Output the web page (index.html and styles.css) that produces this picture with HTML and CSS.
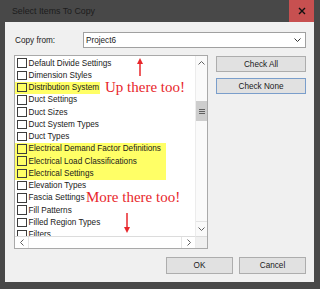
FILE: index.html
```html
<!DOCTYPE html>
<html lang="en">
<head>
    <meta charset="UTF-8">
    <title>Select Items To Copy</title>
    <link rel="stylesheet" href="styles.css">
</head>
<body>
    <div class="window">
        <div class="titlebar">
            <span class="title">Select Items To Copy</span>
            <div class="close">
                <svg width="8" height="8" viewBox="0 0 8 8"><path d="M1 1L7 7M7 1L1 7" stroke="#111" stroke-width="1.4"/></svg>
            </div>
        </div>

        <div class="dialog">
            <div class="copy-row">
                <span class="copy-label">Copy from:</span>
                <div class="combo">
                    <span>Project6</span>
                    <svg class="combo-arrow" width="7" height="4" viewBox="0 0 7 4"><path d="M0.5 0.5L3.5 3.5L6.5 0.5" fill="none" stroke="#333" stroke-width="1"/></svg>
                </div>
            </div>

            <div class="main">
                <div class="listbox">
                    <div class="items">
                        <div class="item"><span class="box"></span>Default Divide Settings</div>
                        <div class="item"><span class="box"></span>Dimension Styles</div>
                        <div class="item hl"><span class="box"></span>Distribution System</div>
                        <div class="item"><span class="box"></span>Duct Settings</div>
                        <div class="item"><span class="box"></span>Duct Sizes</div>
                        <div class="item"><span class="box"></span>Duct System Types</div>
                        <div class="item"><span class="box"></span>Duct Types</div>
                        <div class="hl-group">
                            <div class="item"><span class="box"></span>Electrical Demand Factor Definitions</div>
                            <div class="item"><span class="box"></span>Electrical Load Classifications</div>
                            <div class="item"><span class="box"></span>Electrical Settings</div>
                        </div>
                        <div class="item"><span class="box"></span>Elevation Types</div>
                        <div class="item"><span class="box"></span>Fascia Settings</div>
                        <div class="item"><span class="box"></span>Fill Patterns</div>
                        <div class="item"><span class="box"></span>Filled Region Types</div>
                        <div class="item"><span class="box"></span>Filters</div>
                    </div>

                    <div class="vscroll">
                        <div class="sb-btn">
                            <svg width="7" height="4" viewBox="0 0 7 4"><path d="M0.5 3.5L3.5 0.5L6.5 3.5" fill="none" stroke="#606060"/></svg>
                        </div>
                        <div class="thumb">
                            <svg width="6" height="5" viewBox="0 0 6 5"><path d="M0 0.5H6M0 2.5H6M0 4.5H6" stroke="#606060"/></svg>
                        </div>
                        <div class="sb-btn sb-down">
                            <svg width="7" height="4" viewBox="0 0 7 4"><path d="M0.5 0.5L3.5 3.5L6.5 0.5" fill="none" stroke="#606060"/></svg>
                        </div>
                    </div>

                    <div class="hscroll">
                        <div class="sb-btn sb-left">
                            <svg width="4" height="7" viewBox="0 0 4 7"><path d="M3.5 0.5L0.5 3.5L3.5 6.5" fill="none" stroke="#606060"/></svg>
                        </div>
                        <div class="sb-btn sb-right">
                            <svg width="4" height="7" viewBox="0 0 4 7"><path d="M0.5 0.5L3.5 3.5L0.5 6.5" fill="none" stroke="#606060"/></svg>
                        </div>
                    </div>
                    <div class="corner"></div>

                    <!-- annotations drawn over the list -->
                    <svg class="arrow arrow-up" width="8" height="18" viewBox="0 0 8 18">
                        <path d="M4 4V18" stroke="#e8262b" stroke-width="1.5"/>
                        <path d="M4 0L7 6H1Z" fill="#e8262b"/>
                    </svg>
                    <div class="note note-up">Up there too!</div>
                    <div class="note note-down">More there too!</div>
                    <svg class="arrow arrow-down" width="8" height="20" viewBox="0 0 8 20">
                        <path d="M4 0V15" stroke="#e8262b" stroke-width="1.5"/>
                        <path d="M4 20L7 14H1Z" fill="#e8262b"/>
                    </svg>
                </div>

                <div class="side-buttons">
                    <button class="btn">Check All</button>
                    <button class="btn btn-focus">Check None</button>
                </div>
            </div>

            <div class="footer">
                <button class="btn btn-footer">OK</button>
                <button class="btn btn-footer">Cancel</button>
            </div>
        </div>
    </div>
</body>
</html>
```

FILE: styles.css
```css
body {
    margin: 0;
    font-family: "Liberation Sans", Arial, sans-serif;
    font-size: 8.2px;
    color: #1a1a1a;
}
.window {
    width: 320px;
    height: 289px;
    box-sizing: border-box;
    padding: 0 6px 7px 5px;
    background-color: #484848;
    display: flex;
    flex-direction: column;
}
.titlebar {
    height: 22px;
    display: flex;
    align-items: center;
}
.title {
    padding-left: 7px;
    font-size: 8.8px;
    color: #1c1c1c;
}
.close {
    margin-left: auto;
    width: 25px;
    height: 22px;
    background-color: #c75050;
    display: flex;
    align-items: center;
    justify-content: center;
}
.dialog {
    flex-grow: 1;
    background-color: #f0f0f0;
    padding: 10px 8px 8px 9px;
}
.copy-row {
    display: flex;
    align-items: center;
    height: 16px;
}
.copy-label {
    width: 68px;
    padding-left: 1px;
}
.combo {
    flex-grow: 1;
    height: 16px;
    box-sizing: border-box;
    border: 1px solid #a0a0a0;
    background-color: #fff;
    display: flex;
    align-items: center;
    padding: 0 4px 0 2px;
}
.combo-arrow {
    margin-left: auto;
}
.main {
    display: flex;
    gap: 8px;
    margin-top: 7px;
}
.listbox {
    position: relative;
    width: 194px;
    height: 194px;
    box-sizing: border-box;
    border: 1px solid #a9a9a9;
    background-color: #fff;
    display: grid;
    grid-template-columns: 180px 12px;
    grid-template-rows: 180px 12px;
}
.items {
    overflow: hidden;
    padding-top: 1px;
    display: flex;
    flex-direction: column;
    align-items: flex-start;
}
.item {
    flex-shrink: 0;
    height: 12.25px;
    display: flex;
    align-items: center;
    padding-left: 2px;
    white-space: nowrap;
}
.box {
    width: 9.5px;
    height: 9.5px;
    box-sizing: border-box;
    border: 1px solid #3c3c3c;
    margin-right: 2px;
}
.hl {
    background-color: #ffff66;
    padding-right: 1px;
}
.hl-group {
    flex-shrink: 0;
    background-color: #ffff66;
    padding-right: 5px;
}
.vscroll {
    display: flex;
    flex-direction: column;
    background-color: #fafafa;
    border-left: 1px solid #ececec;
}
.sb-btn {
    display: flex;
    align-items: center;
    justify-content: center;
}
.vscroll .sb-btn {
    height: 14px;
}
.sb-down {
    margin-top: auto;
    border-top: 1px solid #e4e4e4;
}
.thumb {
    margin-top: 31px;
    height: 20px;
    background-color: #cdcdcd;
    display: flex;
    align-items: center;
    justify-content: center;
}
.hscroll {
    display: flex;
    justify-content: space-between;
    border-top: 1px solid #dcdcdc;
    background-color: #fff;
}
.hscroll .sb-btn {
    width: 13px;
}
.sb-left {
    border-right: 1px solid #e4e4e4;
}
.sb-right {
    border-left: 1px solid #e4e4e4;
}
.corner {
    background-color: #f0f0f0;
    border-top: 1px solid #dcdcdc;
    border-left: 1px solid #ececec;
}
.note {
    position: absolute;
    font-family: "Liberation Serif", "Times New Roman", serif;
    font-size: 15px;
    line-height: 15px;
    color: #e8262b;
    white-space: nowrap;
}
.note-up {
    left: 90px;
    top: 24px;
}
.note-down {
    left: 71px;
    top: 134px;
}
.arrow {
    position: absolute;
}
.arrow-up {
    left: 121px;
    top: 2px;
}
.arrow-down {
    left: 108px;
    top: 157px;
}
.side-buttons {
    display: flex;
    flex-direction: column;
    gap: 6px;
    margin-top: 1px;
}
.btn {
    font-family: inherit;
    font-size: 8.2px;
    color: #1a1a1a;
    background-color: #e1e1e1;
    border: 1px solid #adadad;
    padding: 0;
    margin: 0;
}
.side-buttons .btn {
    width: 90px;
    height: 16px;
}
.btn-focus {
    border-color: #7a9ecb;
}
.footer {
    display: flex;
    justify-content: flex-end;
    gap: 6px;
    margin-top: 8px;
}
.btn-footer {
    width: 67px;
    height: 17px;
}
```
